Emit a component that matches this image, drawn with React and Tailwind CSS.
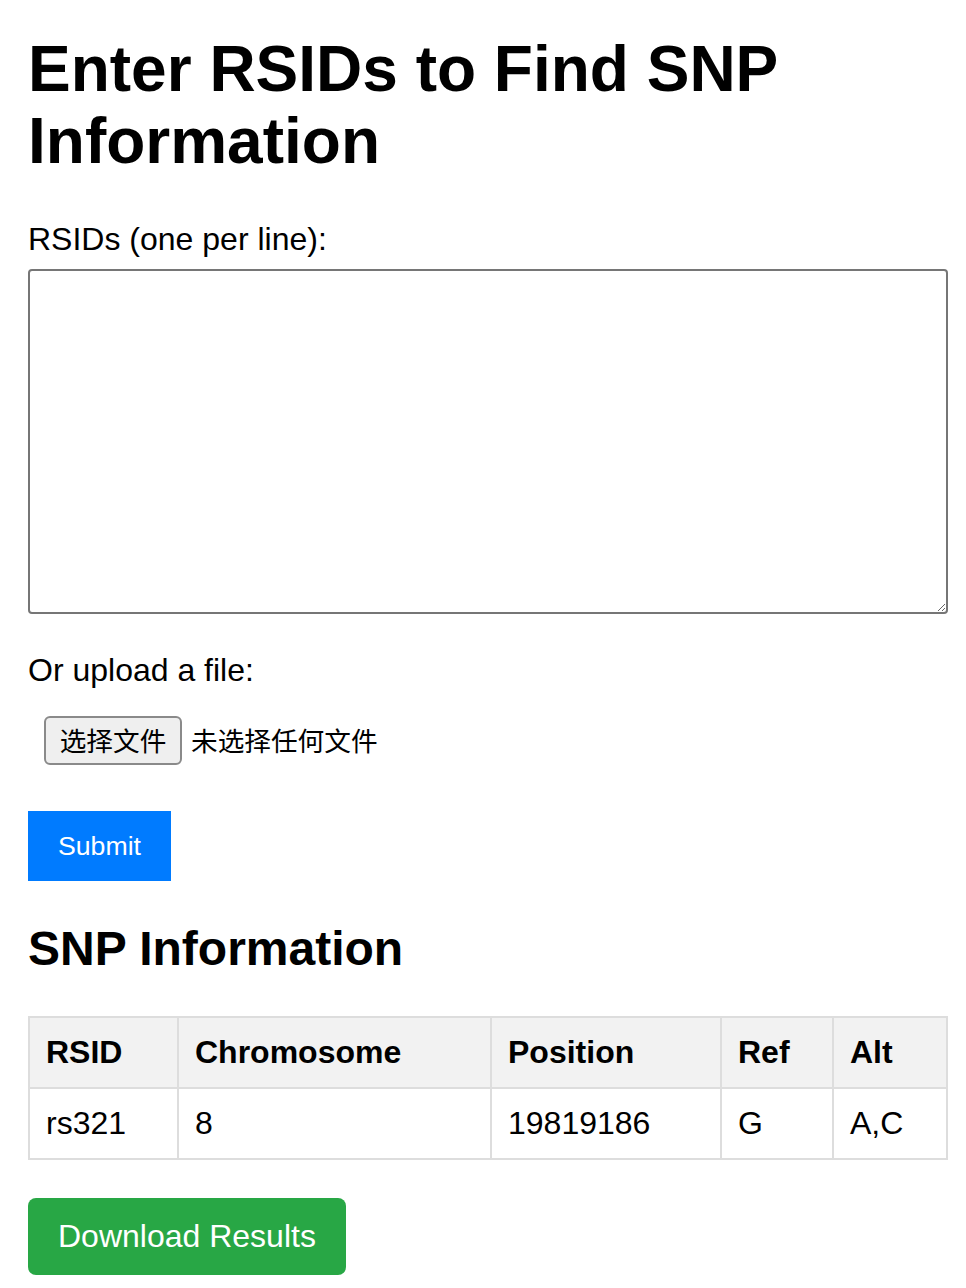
export default function App() {
  const headers = ["RSID", "Chromosome", "Position", "Ref", "Alt"];
  const widths = ["w-[149px]", "w-[313px]", "w-[230px]", "w-[112px]", ""];
  const row = ["rs321", "8", "19819186", "G", "A,C"];
  return (
    <div className="min-h-[1288px] bg-white pl-[28px] pr-[18px] pt-[33px] pb-[13px] text-black font-['Liberation_Sans','Noto_Sans_CJK_SC',Arial,sans-serif]">
      <h1 className="text-[64px] font-bold leading-[72px]">Enter RSIDs to Find SNP Information</h1>
      <label className="mt-[44px] block text-[32px] leading-[36.8px]">RSIDs (one per line):</label>
      <textarea className="mt-[11px] block h-[345px] w-full rounded-[4px] border-2 border-[#767676] bg-white p-[4px] text-[26px] outline-none" />
      <label className="mt-[38px] block text-[32px] leading-[36.8px]">Or upload a file:</label>
      <div className="ml-[16px] mt-[27px] flex items-center">
        <span className="flex h-[49px] w-[138px] items-center justify-center rounded-[6px] border-2 border-[#8a8a8a] bg-[#efefef] text-[26.67px] leading-none font-['Noto_Sans_CJK_SC',sans-serif]">选择文件</span>
        <span className="ml-[9px] text-[26.67px] leading-none font-['Noto_Sans_CJK_SC',sans-serif]">未选择任何文件</span>
      </div>
      <button className="mt-[46px] block bg-[#007bff] px-[30px] py-[20px] text-[26.67px] leading-[30.67px] text-white">Submit</button>
      <h2 className="mt-[40px] text-[48px] font-bold leading-[55.2px]">SNP Information</h2>
      <table className="mt-[40px] w-full table-fixed border-collapse border-2 border-[#ddd] text-[32px] leading-[36.8px]">
        <thead>
          <tr className="bg-[#f2f2f2]">
            {headers.map((h, i) => (
              <th key={h} className={`${widths[i]} border-2 border-[#ddd] px-[16px] py-[16px] text-left font-bold`}>{h}</th>
            ))}
          </tr>
        </thead>
        <tbody>
          <tr>
            {row.map((c, i) => (
              <td key={i} className="border-2 border-[#ddd] px-[16px] py-[16px] text-left">{c}</td>
            ))}
          </tr>
        </tbody>
      </table>
      <button className="mt-[38px] block rounded-[8px] bg-[#28a745] px-[30px] py-[20px] text-[32px] leading-[36.8px] text-white">Download Results</button>
    </div>
  );
}
